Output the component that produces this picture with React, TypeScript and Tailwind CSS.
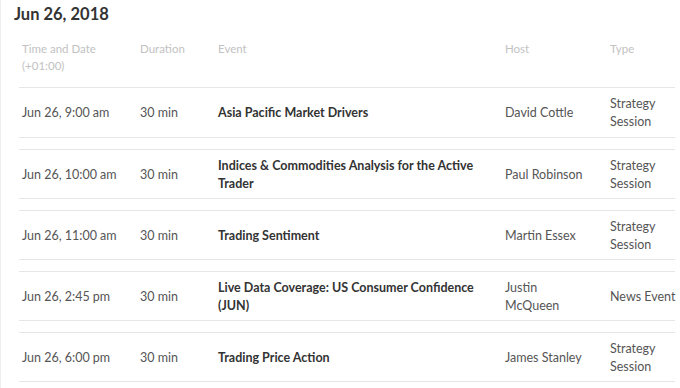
import React from "react";

type Row = { time: string; event: string; host: string; type: string };

const rows: Row[] = [
  { time: "Jun 26, 9:00 am", event: "Asia Pacific Market Drivers", host: "David Cottle", type: "Strategy Session" },
  { time: "Jun 26, 10:00 am", event: "Indices & Commodities Analysis for the Active Trader", host: "Paul Robinson", type: "Strategy Session" },
  { time: "Jun 26, 11:00 am", event: "Trading Sentiment", host: "Martin Essex", type: "Strategy Session" },
  { time: "Jun 26, 2:45 pm", event: "Live Data Coverage: US Consumer Confidence (JUN)", host: "Justin McQueen", type: "News Event" },
  { time: "Jun 26, 6:00 pm", event: "Trading Price Action", host: "James Stanley", type: "Strategy Session" },
];

const cols = "grid grid-cols-[118px_78px_287px_105px_68px]";

export default function App() {
  return (
    <div
      className="w-[680px] h-[388px] overflow-hidden bg-white border-l border-[#eeeeee]"
      style={{ fontFamily: "Lato, 'Open Sans', sans-serif" }}
    >
      <h1 className="pl-[13px] pt-[3px] h-[28px] text-[16.5px] leading-[22px] font-bold text-[#333333]">
        Jun 26, 2018
      </h1>
      <div className="ml-[18px] w-[656px]">
        <div className={`${cols} pt-[12px] pb-[13px] border-b border-[#e6e6e6] text-[11.5px] leading-[17px] text-[#c2c2c2]`}>
          <div className="pl-[3px]">
            Time and Date
            <br />
            (+01:00)
          </div>
          <div className="pl-[3px]">Duration</div>
          <div className="pl-[3px]">Event</div>
          <div className="pl-[3px]">Host</div>
          <div className="pl-[3px]">Type</div>
        </div>
        <div className="flex flex-col gap-[11px]">
          {rows.map((r, i) => (
            <div
              key={i}
              className={`${cols} items-center h-[50px] pt-px border-[#e6e6e6] border-b ${i === 0 ? "" : "border-t"} text-[12.5px] leading-[18px] text-[#555555]`}
            >
              <div className="pl-[3px]">{r.time}</div>
              <div className="pl-[3px]">30 min</div>
              <div className="pl-[3px] pr-[20px] font-bold text-[#333333]">{r.event}</div>
              <div className="pl-[3px] pr-[22px]">{r.host}</div>
              <div className="pl-[3px] whitespace-nowrap">
                {r.type === "Strategy Session" ? (
                  <>
                    Strategy
                    <br />
                    Session
                  </>
                ) : (
                  r.type
                )}
              </div>
            </div>
          ))}
        </div>
      </div>
    </div>
  );
}
